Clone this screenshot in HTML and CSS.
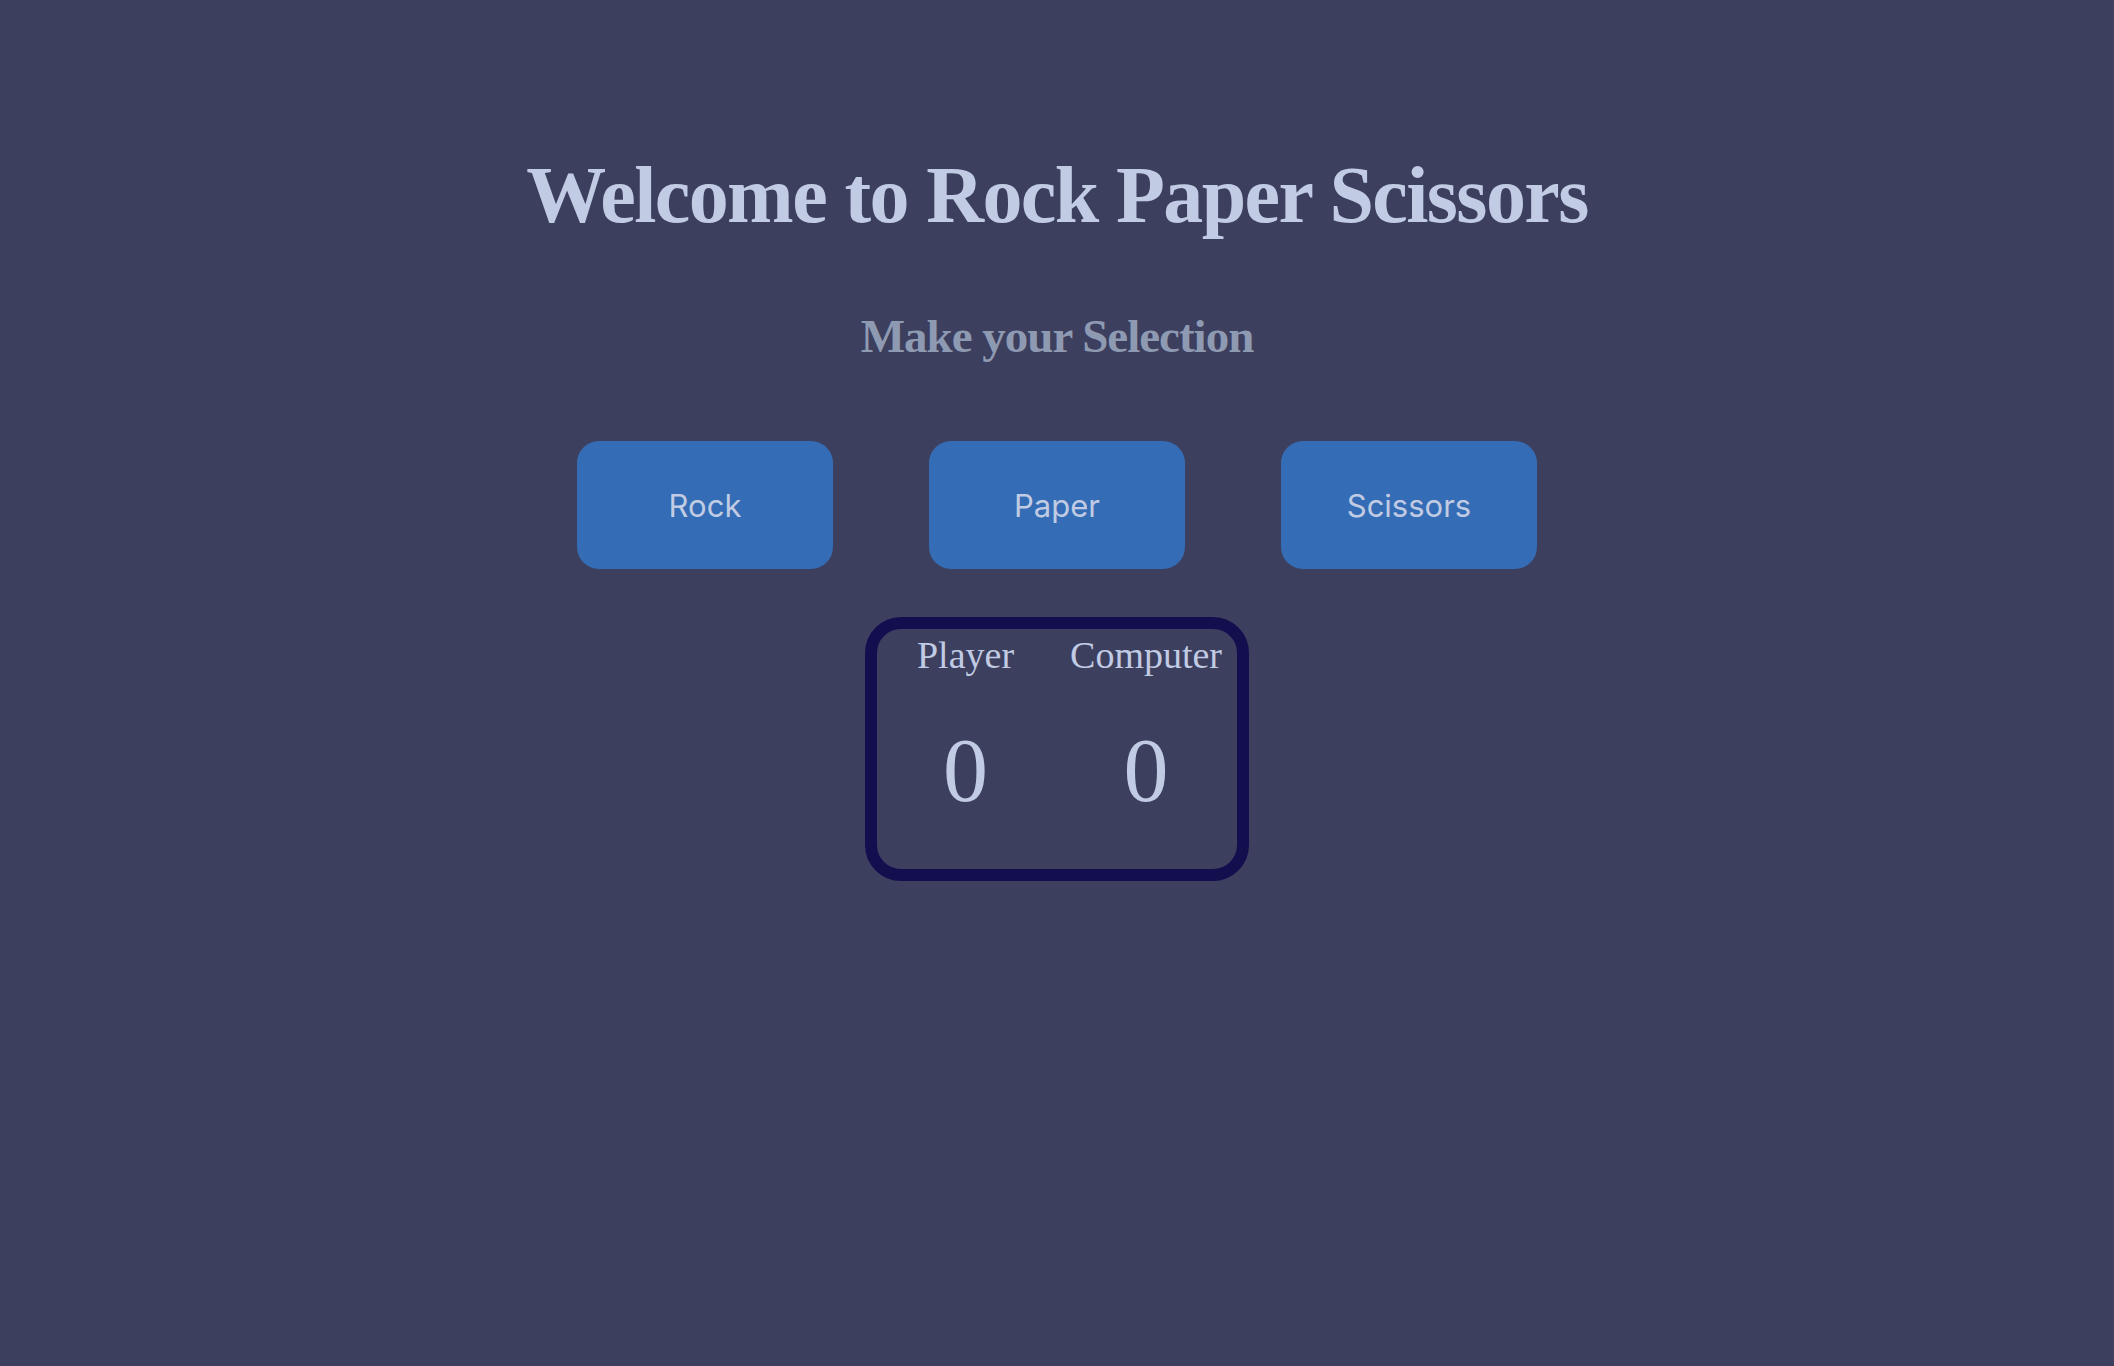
FILE: index.html
```html
<!DOCTYPE html>
<html lang="en">
<head>
<meta charset="utf-8">
<title>Rock Paper Scissors</title>
<link rel="stylesheet" href="styles.css">
</head>
<body>
<main class="game">
  <h1 class="title">Welcome to Rock Paper Scissors</h1>
  <h2 class="subtitle">Make your Selection</h2>
  <div class="choices">
    <button class="choice">Rock</button>
    <button class="choice">Paper</button>
    <button class="choice">Scissors</button>
  </div>
  <div class="scoreboard">
    <div class="score-col">
      <div class="score-label">Player</div>
      <div class="score-value">0</div>
    </div>
    <div class="score-col">
      <div class="score-label">Computer</div>
      <div class="score-value">0</div>
    </div>
  </div>
</main>
</body>
</html>
```
FILE: styles.css
```css
html, body {
  margin: 0;
  padding: 0;
  background: #3d3f5f;
  min-height: 100%;
}

body {
  font-family: "Liberation Serif", "Times New Roman", serif;
  color: #c1cbe3;
}

.game {
  display: flex;
  flex-direction: column;
  align-items: center;
}

.title {
  margin: 155px 0 0;
  font-size: 80px;
  line-height: 1;
  font-weight: bold;
  letter-spacing: -1.6px;
  color: #c1cbe3;
}

.subtitle {
  margin: 78px 0 0;
  font-size: 47px;
  line-height: 1;
  font-weight: bold;
  letter-spacing: -1px;
  color: #8e9ab2;
}

.choices {
  margin-top: 81px;
  display: flex;
  gap: 96px;
}

.choice {
  width: 256px;
  height: 128px;
  border: none;
  border-radius: 22px;
  background: #346db5;
  color: #c1cbe3;
  font-family: Inter, "Liberation Sans", sans-serif;
  font-size: 31px;
  padding: 0;
  cursor: pointer;
}

.scoreboard {
  margin-top: 48px;
  display: flex;
  gap: 56px;
  padding: 7px 15px 53px 40px;
  border: 12px solid #130f4e;
  border-radius: 36px;
}

.score-col {
  display: flex;
  flex-direction: column;
  align-items: center;
}

.score-label {
  font-size: 38px;
  line-height: 1;
}

.score-value {
  margin-top: 52px;
  font-size: 90px;
  line-height: 1;
}
```
